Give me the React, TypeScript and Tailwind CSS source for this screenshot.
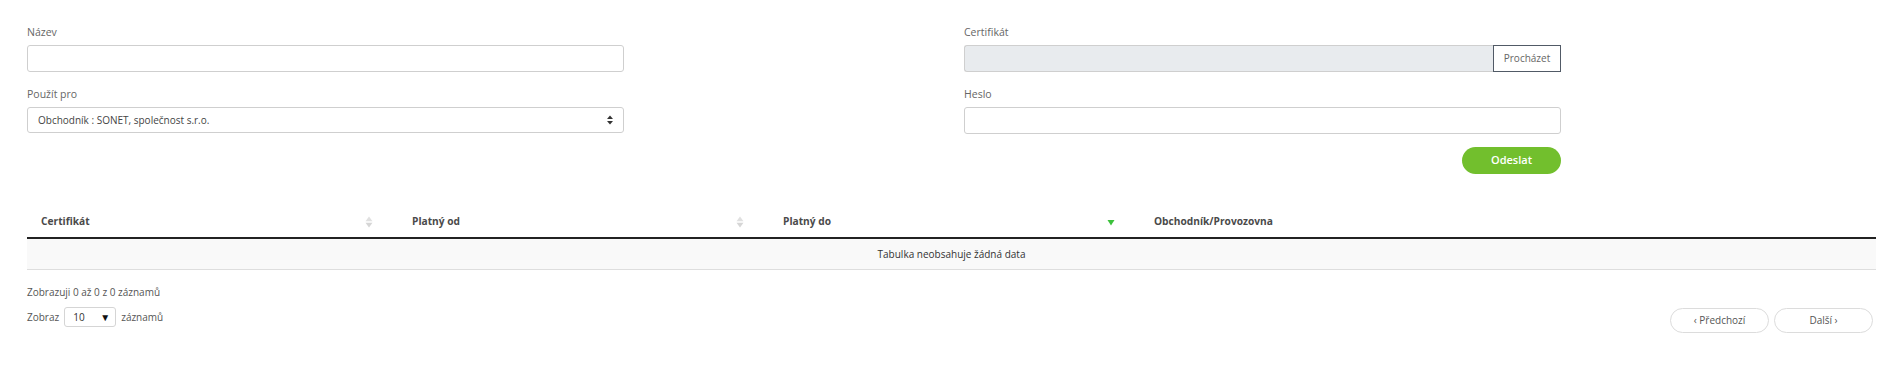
import type { ReactNode } from "react";

const pismo = { fontFamily: '"Open Sans", "Liberation Sans", sans-serif' };

function Popisek({ children }: { children: ReactNode }) {
  return <label className="block text-[10.5px] leading-[16px] text-[#666]">{children}</label>;
}

function RazeniIkona({ aktivni }: { aktivni?: boolean }) {
  if (aktivni) {
    return (
      <svg width="8" height="12" viewBox="0 0 8 12" className="shrink-0">
        <path d="M0.5 4h7L4 9.5z" fill="#3cc13c" />
      </svg>
    );
  }
  return (
    <svg width="8" height="12" viewBox="0 0 8 12" className="shrink-0">
      <path d="M0.5 5.3h7L4 0.5z" fill="#e0e0e0" />
      <path d="M0.5 6.7h7L4 11.5z" fill="#d6d6d6" />
    </svg>
  );
}

function SloupecHlavicky({ nazev, razeni, aktivni }: { nazev: string; razeni?: boolean; aktivni?: boolean }) {
  return (
    <div className="flex w-[371px] shrink-0 items-center justify-between pl-[14px] pr-[25px]">
      <span className="text-[10.2px] font-bold text-[#4a4a4a]">{nazev}</span>
      {razeni ? <RazeniIkona aktivni={aktivni} /> : null}
    </div>
  );
}

export default function App() {
  return (
    <div className="min-h-[366px] bg-white pl-[27px] pr-[6px] pt-[24px]" style={pismo}>
      <div className="grid w-[1534px] grid-cols-[597px_597px] gap-x-[340px]">
        <div>
          <Popisek>Název</Popisek>
          <input className="mt-[5px] block h-[27px] w-full rounded-[3px] border border-[#cfcfcf] bg-white outline-none" />
          <div className="mt-[14px]">
            <Popisek>Použít pro</Popisek>
          </div>
          <div className="mt-[5px] flex h-[26px] w-full items-center justify-between rounded-[3px] border border-[#cfcfcf] bg-white pl-[10px] pr-[10px]">
            <span className="text-[10px] text-[#444]">Obchodník : SONET, společnost s.r.o.</span>
            <svg width="6" height="10" viewBox="0 0 6 10">
              <path d="M0 4h6L3 0.5z" fill="#333" />
              <path d="M0 6h6L3 9.5z" fill="#333" />
            </svg>
          </div>
        </div>

        <div>
          <Popisek>Certifikát</Popisek>
          <div className="mt-[5px] flex h-[27px] w-full">
            <div className="flex-1 rounded-l-[3px] border border-r-0 border-[#cfcfcf] bg-[#e8ebee]" />
            <button
              className="flex w-[68px] items-center justify-center border-[1.5px] border-[#515a66] bg-white text-[10px] text-[#666]"
              type="button"
            >
              Procházet
            </button>
          </div>
          <div className="mt-[14px]">
            <Popisek>Heslo</Popisek>
          </div>
          <input
            className="mt-[5px] block h-[27px] w-full rounded-[3px] border border-[#cfcfcf] bg-white outline-none"
            type="password"
          />
          <div className="mt-[13px] flex justify-end">
            <button
              className="h-[27px] w-[99px] rounded-full bg-[#72bf2d] text-[11px] font-semibold text-white"
              type="button"
            >
              Odeslat
            </button>
          </div>
        </div>
      </div>

      <div className="mt-[33px]">
        <div className="flex h-[32px] border-b-2 border-[#222]">
          <SloupecHlavicky nazev="Certifikát" razeni />
          <SloupecHlavicky nazev="Platný od" razeni />
          <SloupecHlavicky nazev="Platný do" razeni aktivni />
          <SloupecHlavicky nazev="Obchodník/Provozovna" />
        </div>
        <div className="flex h-[31px] items-center justify-center border-b border-[#dedede] bg-[#f9f9f9] text-[10px] text-[#333]">
          Tabulka neobsahuje žádná data
        </div>
      </div>

      <div className="mt-[14px] flex items-end justify-between">
        <div className="text-[10px] text-[#555]">
          <div className="leading-[16px]">Zobrazuji 0 až 0 z 0 záznamů</div>
          <div className="mt-[7px] flex items-center gap-[5px]">
            <span>Zobraz</span>
            <div className="flex h-[20px] w-[52px] items-center justify-between rounded-[3px] border border-[#d5d5d5] px-[8px] pr-[5px] text-[#333]">
              <span>10</span>
              <span className="text-[10px] leading-none text-[#111]">▼</span>
            </div>
            <span>záznamů</span>
          </div>
        </div>
        <div className="mb-[-6px] mr-[3px] flex gap-[5px]">
          <button
            className="h-[25px] w-[99px] rounded-full border border-[#dcdcdc] bg-white text-[10px] text-[#555]"
            type="button"
          >
            ‹ Předchozí
          </button>
          <button
            className="h-[25px] w-[99px] rounded-full border border-[#dcdcdc] bg-white text-[10px] text-[#555]"
            type="button"
          >
            Další ›
          </button>
        </div>
      </div>
    </div>
  );
}
